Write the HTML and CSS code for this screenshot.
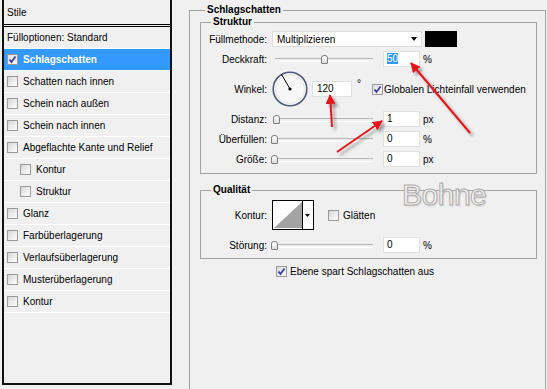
FILE: index.html
```html
<!DOCTYPE html>
<html lang="de">
    <head>
        <title>Ebenenstil</title>
        <meta charset="utf-8">
        <link rel="stylesheet" href="styles.css">
    </head>
    <body>

        <div class="dialog">

            <!-- Stile list -->
            <div class="styles">
                <div class="styles-head">Stile</div>
                <div class="item">Fülloptionen: Standard</div>
                <div class="item sel"><span class="cb on"><svg width="9" height="9" viewBox="0 0 9 9"><path d="M1.5 4.5 L3.5 7 L7.5 1.5" /></svg></span>Schlagschatten</div>
                <div class="item"><span class="cb"></span>Schatten nach innen</div>
                <div class="item"><span class="cb"></span>Schein nach außen</div>
                <div class="item"><span class="cb"></span>Schein nach innen</div>
                <div class="item"><span class="cb"></span>Abgeflachte Kante und Relief</div>
                <div class="item sub"><span class="cb"></span>Kontur</div>
                <div class="item sub"><span class="cb"></span>Struktur</div>
                <div class="item"><span class="cb"></span>Glanz</div>
                <div class="item"><span class="cb"></span>Farbüberlagerung</div>
                <div class="item"><span class="cb"></span>Verlaufsüberlagerung</div>
                <div class="item"><span class="cb"></span>Musterüberlagerung</div>
                <div class="item"><span class="cb"></span>Kontur</div>
            </div>

            <!-- Schlagschatten settings -->
            <fieldset class="group outer">
                <legend>Schlagschatten</legend>

                <fieldset class="group inner">
                    <legend>Struktur</legend>
                    <div class="form">
                        <label>Füllmethode:</label>
                        <div class="ctl">
                            <div class="select"><span>Multiplizieren</span><span class="arrow"></span></div>
                            <div class="swatch"></div>
                        </div>

                        <label>Deckkraft:</label>
                        <div class="ctl">
                            <div class="slider"><span class="thumb" style="left: 49px"></span></div>
                            <div class="num"><span class="hl">50</span></div>
                            <span class="unit">%</span>
                        </div>

                        <label>Winkel:</label>
                        <div class="ctl">
                            <svg class="dial" width="36" height="36" viewBox="0 0 36 36">
                                <circle cx="18" cy="18" r="16.8" fill="#f7f7f7" stroke="#505b78" stroke-width="1.6"/>
                                <circle cx="18" cy="18" r="14.5" fill="none" stroke="#e4e4e4" stroke-width="1"/>
                                <line x1="18" y1="18" x2="9.5" y2="3.4" stroke="#000" stroke-width="1"/>
                                <circle cx="18" cy="18" r="1.6" fill="#000"/>
                            </svg>
                            <div class="num wide">120</div>
                            <span class="unit deg">°</span>
                            <span class="cb on global"><svg width="9" height="9" viewBox="0 0 9 9"><path d="M1.5 4.5 L3.5 7 L7.5 1.5" /></svg></span>
                            <span class="cb-text">Globalen Lichteinfall verwenden</span>
                        </div>

                        <label>Distanz:</label>
                        <div class="ctl">
                            <div class="slider"><span class="thumb" style="left: 1px"></span></div>
                            <div class="num">1</div>
                            <span class="unit">px</span>
                        </div>

                        <label>Überfüllen:</label>
                        <div class="ctl">
                            <div class="slider"><span class="thumb" style="left: -1px"></span></div>
                            <div class="num">0</div>
                            <span class="unit">%</span>
                        </div>

                        <label>Größe:</label>
                        <div class="ctl">
                            <div class="slider"><span class="thumb" style="left: -1px"></span></div>
                            <div class="num">0</div>
                            <span class="unit">px</span>
                        </div>
                    </div>
                </fieldset>

                <fieldset class="group inner quality">
                    <legend>Qualität</legend>
                    <div class="form q">
                        <label>Kontur:</label>
                        <div class="ctl">
                            <svg class="contour" width="42" height="30" viewBox="0 0 42 30">
                                <rect x="0.5" y="0.5" width="41" height="29" fill="#fff" stroke="#000"/>
                                <polygon points="2,28 30,2 30,28" fill="#a3a3a3"/>
                                <line x1="30.5" y1="1" x2="30.5" y2="29" stroke="#000"/>
                                <polygon points="33,14 38,14 35.5,17" fill="#000"/>
                            </svg>
                            <span class="cb smooth"></span>
                            <span class="cb-text">Glätten</span>
                        </div>

                        <label>Störung:</label>
                        <div class="ctl">
                            <div class="slider"><span class="thumb" style="left: -1px"></span></div>
                            <div class="num">0</div>
                            <span class="unit">%</span>
                        </div>
                    </div>
                </fieldset>

                <div class="layer">
                    <span class="cb on"><svg width="9" height="9" viewBox="0 0 9 9"><path d="M1.5 4.5 L3.5 7 L7.5 1.5" /></svg></span>
                    <span>Ebene spart Schlagschatten aus</span>
                </div>
            </fieldset>
        </div>

        <div class="watermark">Bohne</div>

        <svg class="arrows" width="547" height="389" viewBox="0 0 547 389">
            <defs>
                <marker id="head" viewBox="0 0 10 10" refX="9" refY="5" markerWidth="5" markerHeight="5" orient="auto">
                    <path d="M0 0 L10 5 L0 10 z" fill="#e3171b"/>
                </marker>
                <filter id="shadow" x="-20%" y="-20%" width="140%" height="140%">
                    <feDropShadow dx="3" dy="3" stdDeviation="1.5" flood-color="#000" flood-opacity="0.35"/>
                </filter>
            </defs>
            <g filter="url(#shadow)" stroke="#e3171b" stroke-width="2" fill="none">
                <line x1="470" y1="133" x2="411" y2="63" marker-end="url(#head)"/>
                <line x1="332" y1="127" x2="330" y2="95" marker-end="url(#head)"/>
                <line x1="337" y1="152" x2="382" y2="121" marker-end="url(#head)"/>
            </g>
        </svg>

    </body>
</html>
```

FILE: styles.css
```css
* {
    box-sizing: border-box;
}
body {
    margin: 0;
    width: 547px;
    height: 389px;
    overflow: hidden;
    position: relative;
    background-color: #f0f0f0;
    font-family: "Liberation Sans", Arial, sans-serif;
    font-size: 10px;
    color: #000;
}
.dialog {
    display: flex;
    align-items: flex-start;
}
/* Style list on the left */
.styles {
    margin-left: 2px;
    width: 170px;
    height: 385px;
    border: 2px solid #111;
    border-top: none;
    background-color: #f0f0f0;
}
.styles-head {
    height: 27px;
    padding: 1px 0 0 3px;
    line-height: 23px;
    border-bottom: 3px double #000;
}
.item {
    display: flex;
    align-items: center;
    gap: 5px;
    height: 22px;
    padding-left: 3px;
    border-bottom: 1px solid #fff;
}
.item.sel {
    background-color: #3399ff;
    color: #fff;
    font-weight: bold;
}
.item.sub {
    padding-left: 16px;
}
/* Checkboxes */
.cb {
    flex: none;
    display: inline-flex;
    align-items: center;
    justify-content: center;
    width: 11px;
    height: 11px;
    border: 1px solid #9a9a9a;
    background: linear-gradient(135deg, #d6d6d6, #f8f8f8 80%);
}
.cb.on {
    background: linear-gradient(135deg, #dcdce4, #f4f4f8 80%);
}
.cb svg path {
    fill: none;
    stroke: #3b3f9a;
    stroke-width: 1.8;
}
/* Group boxes */
.group {
    margin: 0;
    padding: 0;
    min-width: 0;
    border: 1px solid #a3a3a3;
}
.group > legend {
    padding: 0 2px;
    line-height: 12px;
    font-weight: bold;
}
.outer {
    margin: 4px 0 0 17px;
    width: 357px;
    height: 400px;
    padding: 0 8px 0 10px;
}
.outer > legend {
    margin-left: 5px;
}
.inner > legend {
    margin-left: 10px;
}
.quality {
    margin-top: 10px;
}
.form {
    display: grid;
    grid-template-columns: 66px auto;
    column-gap: 5px;
    row-gap: 4px;
    align-items: center;
    padding: 3px 0 6px;
}
.form.q {
    row-gap: 7px;
    padding: 4px 0 5px;
}
.form label {
    text-align: right;
}
.ctl {
    display: flex;
    align-items: center;
    height: 16px;
}
.form .ctl:has(.dial) {
    height: 36px;
}
.form .ctl:has(.contour) {
    height: 30px;
}
/* Controls */
.select {
    display: flex;
    justify-content: space-between;
    align-items: center;
    width: 150px;
    height: 16px;
    padding: 0 4px 0 4px;
    background-color: #fff;
    border: 1px solid #dcdcdc;
}
.arrow {
    width: 0;
    height: 0;
    border-left: 3px solid transparent;
    border-right: 3px solid transparent;
    border-top: 4px solid #000;
}
.swatch {
    width: 32px;
    height: 16px;
    margin-left: 3px;
    background-color: #000;
}
.slider {
    position: relative;
    flex: none;
    width: 104px;
    height: 16px;
}
.slider:before {
    content: "";
    position: absolute;
    left: 3px;
    right: 3px;
    top: 7px;
    height: 2px;
    border-top: 1px solid #b4b4b4;
    border-bottom: 1px solid #fff;
}
.thumb {
    position: absolute;
    top: 4px;
    width: 7px;
    height: 9px;
    border: 1px solid #7c7c7c;
    border-radius: 3px 3px 1px 1px;
    background: linear-gradient(#fff, #dedede);
}
.num {
    flex: none;
    width: 37px;
    height: 16px;
    margin-left: 7px;
    padding-left: 3px;
    line-height: 14px;
    background-color: #fff;
    border: 1px solid #e0e0e0;
}
.num.wide {
    width: 40px;
    margin-left: 4px;
    padding-left: 4px;
}
.hl {
    background-color: #3399ff;
    color: #fff;
}
.unit {
    margin-left: 3px;
}
.unit.deg {
    margin-left: 5px;
    align-self: flex-start;
    margin-top: 7px;
}
.dial {
    flex: none;
}
.cb.global {
    margin-left: 11px;
}
.cb-text {
    margin-left: 1px;
}
.cb.smooth {
    margin-left: 14px;
    margin-right: 3px;
}
.layer {
    display: flex;
    align-items: center;
    gap: 3px;
    margin: 7px 0 0 76px;
}
/* Overlays */
.watermark {
    position: absolute;
    left: 402px;
    top: 178px;
    font-size: 30px;
    letter-spacing: -0.5px;
    color: #f6f6f6;
    -webkit-text-stroke: 1px #adadad;
    text-shadow: 1px 1px 2px #c4c4c4;
}
.arrows {
    position: absolute;
    left: 0;
    top: 0;
    pointer-events: none;
}
```
